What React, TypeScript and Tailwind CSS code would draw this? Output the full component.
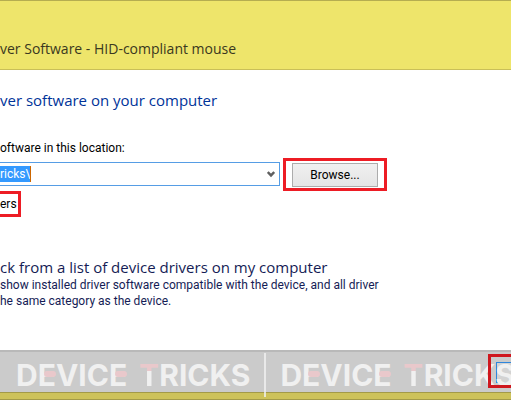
import type { ReactNode } from 'react'
import { useState } from 'react'

// Red frame that marks a control in the guide
function Marker({ children, className = '' }: { children: ReactNode; className?: string }) {
  return <div className={`border-3 border-[#ed1c24] ${className}`}>{children}</div>
}

function AccentE() {
  return (
    <span className="relative">
      E
      <span className="absolute top-1/2 left-1.5 -mt-1 h-1.5 w-3 rounded-full bg-[#e9c8cb]" />
    </span>
  )
}

function Wordmark() {
  return (
    <div className="flex shrink-0 gap-3 font-['Inter'] text-[30px] leading-8 font-bold text-[#f0f0f0]">
      <span>
        D<AccentE />VIC<AccentE />
      </span>
      <span>
        <span className="bg-linear-to-b from-[#e9c8cb] from-40% to-[#f0f0f0] to-40% bg-clip-text text-transparent">T</span>
        RICKS
      </span>
    </div>
  )
}

export default function App() {
  const [path, setPath] = useState('ricks\\')

  return (
    <div className="flex min-h-screen flex-col overflow-hidden bg-white font-['Roboto',sans-serif] text-xs text-black">

      {/* Title bar */}
      <header className="flex h-[70px] items-end border-y border-t-[#b5ad50] border-b-[#c9bf58] bg-[#eee56b] pb-2">
        <h1 className="font-['Open_Sans'] text-sm leading-6 whitespace-nowrap text-[#3a3820]">ver Software - HID-compliant mouse</h1>
      </header>

      <main className="flex flex-1 flex-col items-start whitespace-nowrap">
        <h2 className="mt-5 font-['Open_Sans'] text-[15px] leading-5 text-[#003399]">ver software on your computer</h2>

        <label htmlFor="location" className="mt-7 leading-5">oftware in this location:</label>

        {/* Search path */}
        <div className="flex items-start gap-[3px]">
          <div className="mt-1 flex h-6 w-[280px] items-center justify-between border border-l-0 border-[#569de5] pr-1">
            <input
              id="location"
              value={path}
              onChange={(e) => setPath(e.target.value)}
              className="field-sizing-content h-4 border-r border-[#cc6600] bg-[#3399ff] text-white outline-none"
            />
            <button aria-label="Show locations">
              <svg width="8" height="7" viewBox="0 0 8 7" fill="none" stroke="#606060" strokeWidth="2.4">
                <path d="M.8 1 4 4.4 7.2 1" />
              </svg>
            </button>
          </div>
          <Marker className="px-1.5 pt-0.5 pb-px">
            <button className="h-6 w-[86px] border border-[#acacac] bg-linear-to-b from-[#f0f0f0] to-[#e5e5e5]">Browse...</button>
          </Marker>
        </div>

        <Marker className="border-l-0 pr-px leading-5">ers</Marker>

        <a href="#pick" className="mt-10 text-[#151c55]">
          <span className="block font-['Open_Sans'] text-[15px] leading-5">ck from a list of device drivers on my computer</span>
          <span className="block leading-4">show installed driver software compatible with the device, and all driver</span>
          <span className="block leading-4">he same category as the device.</span>
        </a>
      </main>

      {/* Command area */}
      <footer className="relative overflow-hidden">
        <div className="flex h-[42px] items-center justify-end border-t-2 border-[#b9b9b9] bg-[#cbcbcb]">
          <button aria-label="Next" className="h-[21px] w-[15px] border border-r-0 border-[#2f86dc] bg-[#d3d3d3]" />
        </div>
        <div className="h-2 border-y border-[#a39a48] bg-[#cdc25a]" />

        {/* Watermark */}
        <div className="pointer-events-none absolute inset-0 flex items-center gap-3.5 pl-4">
          <Wordmark />
          <div className="h-11 w-0.5 shrink-0 bg-[#f0f0f0]/80" />
          <Wordmark />
        </div>
        <div className="pointer-events-none absolute top-1 right-0 h-[34px] w-[23px] border-3 border-r-0 border-[#cf171e]" />
      </footer>
    </div>
  )
}
